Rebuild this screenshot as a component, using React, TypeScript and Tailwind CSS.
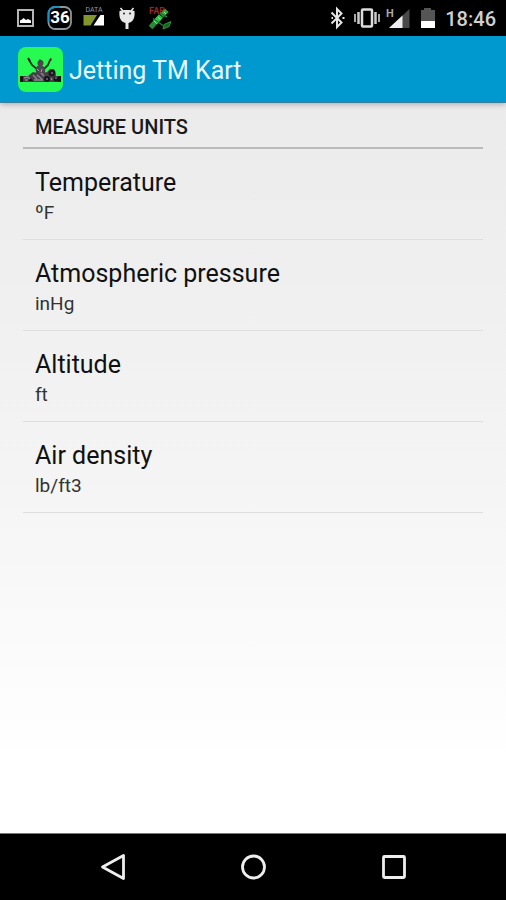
import { useState } from 'react';

type Setting = {
  id: string;
  title: string;
  units: string[];
};

const SETTINGS: Setting[] = [
  { id: 'temperature', title: 'Temperature', units: ['ºF', 'ºC'] },
  { id: 'pressure', title: 'Atmospheric pressure', units: ['inHg', 'mb'] },
  { id: 'altitude', title: 'Altitude', units: ['ft', 'm'] },
  { id: 'density', title: 'Air density', units: ['lb/ft3', 'kg/m3'] },
];

function NotificationIcons() {
  return (
    <div className="flex items-center">
      {/* Picture saved */}
      <svg className="h-9 w-9" viewBox="0 0 36 36" fill="none" aria-hidden="true">
        <rect x="10" y="10" width="15" height="16" stroke="#b5b5b5" strokeWidth="2" />
        <path d="M12 23v-2.500l2-1 1.500-1.500 2.500 2 2-1 3 1.500V23z" fill="#fff" />
      </svg>
      {/* Battery percentage */}
      <div className="relative flex h-9 w-8 items-center justify-center">
        <svg className="absolute inset-0 h-9 w-8" viewBox="0 0 32 36" fill="none" aria-hidden="true">
          <rect x="4.500" y="7" width="22.500" height="22" rx="6.500" stroke="#8d9699" strokeWidth="1.800" />
          <path d="M16 7h-5a6.500 6.500 0 0 0-6.500 6.500v8" stroke="#1793c4" strokeWidth="1.800" />
        </svg>
        <span className="relative text-[17px] font-bold text-white">36</span>
      </div>
      {/* Data counter */}
      <svg className="h-9 w-10" viewBox="7 0 40 36" aria-hidden="true">
        <text x="25" y="12" textAnchor="middle" fontSize="7" fill="#9a9a9a">
          DATA
        </text>
        <path d="M14.500 15H28l-6.500 10.500h-7z" fill="#83952b" />
        <path d="M31.500 15H35v10.500H24.500z" fill="#fff" />
      </svg>
      {/* Debug bridge */}
      <svg className="h-9 w-5" viewBox="0 0 20 36" aria-hidden="true">
        <path d="M4.500 8 7 11M17.500 8 15 11" stroke="#eee" strokeWidth="1.500" />
        <path d="M3.500 11c2-1.500 13-1.500 15 0 .5 5-.5 9-3.500 11l-2.500 1V29h-3v-6L7 22c-3-2-4-6-3.500-11z" fill="#e8e8e8" />
        <circle cx="8" cy="13.500" r="1" fill="#222" />
        <circle cx="14" cy="13.500" r="1" fill="#222" />
      </svg>
      {/* Satellite */}
      <svg className="h-9 w-10" viewBox="0 0 40 36" fill="none" aria-hidden="true">
        <text x="13" y="14" fontSize="9" fontWeight="bold" fill="#9c2320">
          FAB
        </text>
        <path d="m14.500 27.500 6-6.500" stroke="#27893a" strokeWidth="5" />
        <path d="m19 22.500 6-6.500" stroke="#2fc244" strokeWidth="5.500" />
        <path d="m25.500 15.500 5.500-5" stroke="#32a63f" strokeWidth="5" />
        <path d="m17 18.500 10 7M24 13l7 4" stroke="#1e8230" strokeWidth="1.500" />
        <path d="m27 29 1-4.500 7-3-2 5z" fill="#16651f" stroke="#2b943a" />
        <path d="m18 21 2.500 2.500M22 17l2.500 2.500M28 12l2 2" stroke="#8ee899" />
      </svg>
    </div>
  );
}

function SystemIcons() {
  return (
    <svg className="h-9 w-[114px]" viewBox="0 0 114 36" fill="none" aria-hidden="true">
      {/* Bluetooth */}
      <path d="m8.500 12.500 10 10-4.500 4.500V9l4.500 4.500-10 10" stroke="#e6e6e6" strokeWidth="2" />
      <path d="M8.500 18h1.500M19.500 18h2" stroke="#e6e6e6" strokeWidth="2" />
      {/* Vibrate */}
      <rect x="39" y="9.500" width="10" height="17" rx="1" stroke="#ddd" strokeWidth="2.500" />
      <path d="M35.500 12v12M52.500 12v12" stroke="#ccc" strokeWidth="2.500" />
      <path d="M32 14v8M56 14v8" stroke="#aaa" strokeWidth="2" />
      {/* Signal */}
      <path d="M86.500 9v19H66z" fill="#4a4a4a" />
      <path d="M79.500 15.500V28H66z" fill="#eee" />
      <text x="63" y="17" fontSize="11" fontWeight="bold" fill="#aaa">
        H
      </text>
      {/* Battery */}
      <path d="M98 10h3V8h7v2h4v18H98z" fill="#555" />
      <path d="M98 21h14v7H98z" fill="#fff" />
    </svg>
  );
}

function StatusBar() {
  return (
    <div className="flex h-9 shrink-0 items-center justify-between bg-black pl-2 pr-2.5">
      <NotificationIcons />
      <div className="flex items-center gap-2">
        <SystemIcons />
        <span className="pt-0.5 text-[20px] leading-6 font-medium text-[#d0d0d0]">18:46</span>
      </div>
    </div>
  );
}

function KartLogo() {
  return (
    <svg className="size-[45px] shrink-0" viewBox="0 0 45 45" aria-hidden="true">
      <rect width="45" height="45" rx="8" fill="#27fa50" />
      {/* Driver with both arms up */}
      <path d="m11 13 3 5 6 5M32 13l-2 5-5 5" fill="none" stroke="#17331f" strokeWidth="1.800" />
      <path d="M10 11 12 14M33 11.500 32 14" stroke="#222" strokeWidth="2" />
      <path d="M18 25c-1-4 1-7 4-7s6 3 5 7l3 6H14z" fill="#4b464e" />
      <circle cx="22.500" cy="16" r="3" fill="#4b454d" />
      <path d="M22 12.500v2" stroke="#444" strokeWidth="2" />
      {/* Bodywork */}
      <path d="M2 29h8l5-4 7 2 7-2 3-3h4l1 3 1 4 5 1v5H2z" fill="#454048" />
      <path d="M2 29h3v6H2zM12 30l3 4h-5zM40 29h3v6h-3z" fill="#161318" />
      <circle cx="34" cy="26" r="3.500" fill="#1d1920" />
      <circle cx="29" cy="32" r="3" fill="#161318" />
      <circle cx="38" cy="32" r="2.500" fill="#161318" />
      <path d="m6 31 4-1 2 2M15 28l4 4M19 28l5 4M23 26l3 3M16 33h9" fill="none" stroke="#8d8491" strokeWidth="1.500" />
      <path d="M19 22l2 2M24 22l-1 3M33 26h2M28 32h2M37 31h2M33 31l1 2M7 33h3" stroke="#a79cab" />
    </svg>
  );
}

function SettingRow({ setting }: { setting: Setting }) {
  const [index, setIndex] = useState(0);

  return (
    <li className="border-b border-[#dedede]">
      <button
        type="button"
        onClick={() => setIndex((index + 1) % setting.units.length)}
        className="block w-full px-3 pt-[18px] pb-3 text-left"
      >
        <span className="block text-[25px] leading-8 text-[#111]">{setting.title}</span>
        <span className="block text-[19px] leading-7 text-[#333]">{setting.units[index]}</span>
      </button>
    </li>
  );
}

function NavigationBar() {
  return (
    <nav className="flex h-[67px] shrink-0 items-center justify-center gap-[92px] border-t border-[#777] bg-black text-[#eee]">
      <button type="button" aria-label="Back" className="p-2">
        <svg className="size-8" viewBox="0 0 32 32" fill="none" stroke="currentColor" strokeWidth="2.800">
          <path d="M26.500 4.500v23L5.500 16z" strokeLinejoin="round" />
        </svg>
      </button>
      <button type="button" aria-label="Home" className="p-2">
        <svg className="size-8" viewBox="0 0 32 32" fill="none" stroke="currentColor" strokeWidth="2.800">
          <circle cx="16.500" cy="16" r="11" />
        </svg>
      </button>
      <button type="button" aria-label="Recent apps" className="p-2">
        <svg className="size-8" viewBox="0 0 32 32" fill="none" stroke="currentColor" strokeWidth="2.800">
          <rect x="6.500" y="5.500" width="21" height="21" rx="1" />
        </svg>
      </button>
    </nav>
  );
}

function App() {
  return (
    <div className="flex min-h-screen flex-col bg-black font-['Roboto',sans-serif]">
      <StatusBar />

      <header className="z-10 flex h-[67px] shrink-0 items-center gap-1.5 border-b border-[#3c7f9b] bg-[#0099cf] px-[18px] shadow-[0_1px_6px_rgba(0,0,0,0.3)]">
        <KartLogo />
        <h1 className="pt-1 text-[25px] leading-8 text-[#e8f8ff]">Jetting TM Kart</h1>
      </header>

      <main className="flex-1 bg-linear-to-b from-[#ebebeb] via-[#f4f4f4] via-50% to-white to-90% px-[23px]">
        <h2 className="border-b-2 border-[#bbb] px-3 pt-2.5 pb-1.5 text-[20px] leading-7 font-medium text-[#1a1a1a]">
          MEASURE UNITS
        </h2>
        <ul>
          {SETTINGS.map((setting) => (
            <SettingRow key={setting.id} setting={setting} />
          ))}
        </ul>
      </main>

      <NavigationBar />
    </div>
  );
}

export default App;
